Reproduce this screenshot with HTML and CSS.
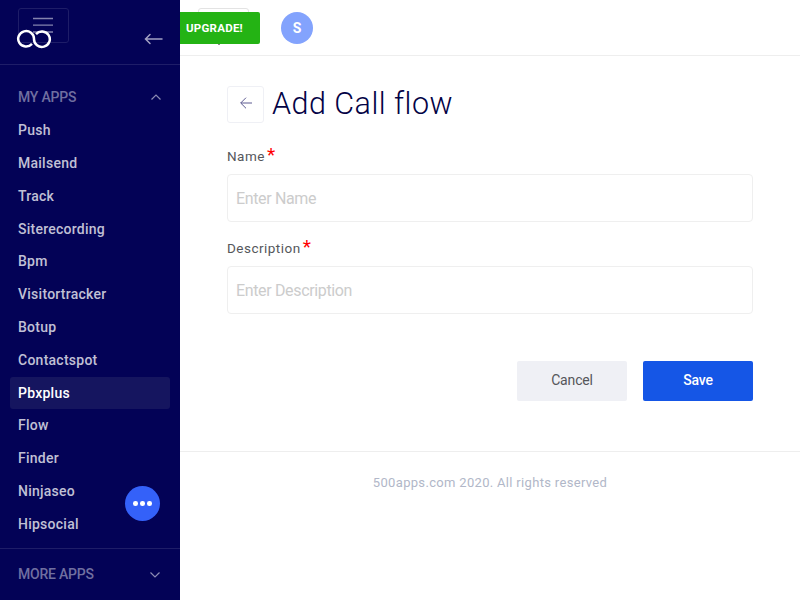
FILE: index.html
```html
<!DOCTYPE html>
<html lang="en">
<head>
<meta charset="utf-8">
<title>Add Call flow</title>
<link rel="stylesheet" href="styles.css">
</head>
<body>
<aside class="sidebar">
  <header class="brand">
    <button class="menu-toggle" aria-label="Menu"><svg width="20" height="16" viewBox="0 0 20 16"><path d="M0 1.5h20M0 8.2h20M0 15h20"/></svg></button>
    <svg class="logo" width="36" height="20" viewBox="0 0 36 20"><path d="M16 14.9A7.900 7.700 0 1 1 18 10A7.900 7.700 0 1 0 20 5.1"/></svg>
    <svg class="collapse" width="20" height="12" viewBox="0 0 20 12"><path d="M18 6H2M6 1.500L1.500 6l4.500 4.500"/></svg>
  </header>
  <div class="section section-open">MY APPS<svg width="12" height="8" viewBox="0 0 12 8"><path d="M1.500 6.500L6 2l4.500 4.500"/></svg></div>
  <nav class="apps">
    <a>Push</a>
    <a>Mailsend</a>
    <a>Track</a>
    <a>Siterecording</a>
    <a>Bpm</a>
    <a>Visitortracker</a>
    <a>Botup</a>
    <a>Contactspot</a>
    <a class="active">Pbxplus</a>
    <a>Flow</a>
    <a>Finder</a>
    <a>Ninjaseo</a>
    <a>Hipsocial</a>
  </nav>
  <div class="section section-more">MORE APPS<svg width="12" height="8" viewBox="0 0 12 8"><path d="M1.500 1.500L6 6l4.500-4.500"/></svg></div>
  <button class="chat" aria-label="More"><i></i><i></i><i></i></button>
</aside>
<div class="page">
  <header class="topbar">
    <span class="hidden-toggle"></span>
    <a class="upgrade">UPGRADE!</a>
    <span class="avatar">S</span>
  </header>
  <main class="content">
    <div class="heading">
      <button class="back" aria-label="Back"><svg width="12" height="12" viewBox="0 0 12 12"><path d="M12 6H.8M6 .7L.7 6 6 11.300"/></svg></button>
      <h1>Add Call flow</h1>
    </div>
    <form>
      <label for="name">Name<span class="required">*</span></label>
      <input id="name" placeholder="Enter Name">
      <label for="description">Description<span class="required">*</span></label>
      <input id="description" placeholder="Enter Description">
      <div class="actions">
        <button type="button" class="cancel">Cancel</button>
        <button type="button" class="save">Save</button>
      </div>
    </form>
  </main>
  <footer class="footer">500apps.com 2020. All rights reserved</footer>
</div>
</body>
</html>
```
FILE: styles.css
```css
* { box-sizing: border-box; }
body { margin: 0; height: 600px; display: flex; overflow: hidden; background: #fff; font-family: Roboto, sans-serif; font-size: 14px; }
button, input { font-family: inherit; margin: 0; }
svg { display: block; fill: none; }

.sidebar { position: relative; width: 180px; height: 600px; flex: none; background: #030256; color: #c0c0d5; }
.brand { position: relative; height: 65px; border-bottom: 1px solid #1e1d68; }
.menu-toggle { position: absolute; left: 18px; top: 8px; width: 51px; height: 35px; border: 1px solid #1e1d68; border-radius: 3px; background: none; padding: 0; }
.menu-toggle svg { position: absolute; left: 14px; top: 8px; stroke: #8483ae; stroke-width: 1.3; }
.logo { position: absolute; left: 16px; top: 29px; stroke: #fff; stroke-width: 2.5; }
.collapse { position: absolute; left: 144px; top: 33px; stroke: #a3a1c3; stroke-width: 1.5; stroke-linecap: round; }

.section { display: flex; align-items: center; justify-content: space-between; padding: 0 18px; color: #706fa0; font-size: 14px; font-weight: 500; letter-spacing: -.22px; }
.section svg { stroke: #8c8bb3; stroke-width: 1.2; }
.section-open { height: 49px; padding-top: 15px; }
.apps { display: flex; flex-direction: column; padding: .3px 10px 0; height: 434px; }
.apps a { height: 32.800px; flex: none; padding: 0 8px; line-height: 32.800px; font-size: 14px; font-weight: 500; letter-spacing: .25px; border-radius: 3px; }
.apps .active { background: #15155f; color: #fff; }
.section-more { height: 52px; padding-bottom: 2px; border-top: 1px solid #1e1d68; }
.section-more svg { position: relative; top: 1px; left: -1px; }
.chat { position: absolute; left: 125px; top: 486px; width: 35px; height: 35px; border: 0; border-radius: 50%; background: #3461f9; padding: 0; display: flex; align-items: center; justify-content: center; gap: 2.500px; }
.chat i { width: 4.700px; height: 4.700px; border-radius: 50%; background: #fff; }

.page { flex: 1; display: flex; flex-direction: column; }
.topbar { position: relative; height: 56px; flex: none; display: flex; align-items: center; gap: 21px; border-bottom: 1px solid #eee; }
.hidden-toggle { position: absolute; left: 18px; top: 8px; width: 51px; height: 30px; border: 1px solid #e3e3e3; border-radius: 3px; }
.hidden-toggle::after { content: ""; position: absolute; left: 19px; top: 34px; width: 2px; height: 2px; background: #888; }
.upgrade { position: relative; width: 80px; height: 32px; padding-left: 6px; line-height: 33px; border-radius: 0 2px 2px 0; background: #24b314; color: #fff; font-size: 11.500px; font-weight: 700; letter-spacing: .25px; }
.avatar { width: 32px; height: 32px; border-radius: 50%; background: #83a3fd; color: #fff; font-size: 14px; font-weight: 700; line-height: 33px; text-align: center; }

.content { height: 395px; padding: 28px 47px 0; }
.heading { height: 40px; display: flex; align-items: center; gap: 8px; }
.back { width: 37px; height: 37px; padding: 0; display: flex; align-items: center; justify-content: center; background: #fff; border: 1px solid #eff0f5; border-radius: 3px; }
.back svg { stroke: #5d5b91; stroke-width: 1; position: relative; top: -1px; }
h1 { margin: 0; color: #030245; font-size: 30.500px; font-weight: 300; letter-spacing: .48px; line-height: 40px; }
form { display: flex; flex-direction: column; padding-top: 22px; }
label { display: flex; height: 28px; line-height: 20px; color: #55575c; font-size: 13.500px; letter-spacing: .48px; }
.required { color: #f00; font-size: 19px; line-height: 17px; margin-left: 2px; letter-spacing: 0; }
input { width: 100%; height: 48px; margin-bottom: 16px; padding: 0 8px; border: 1px solid #efefef; border-radius: 4px; font-size: 16px; letter-spacing: -.35px; }
input::placeholder { color: #ccc; opacity: 1; }
.actions { display: flex; justify-content: flex-end; gap: 16px; padding-top: 31px; }
.actions button { width: 110px; height: 40px; border: 0; border-radius: 2px; padding: 0 0 2px; font-size: 14px; letter-spacing: -.15px; }
.cancel { background: #eff0f5; color: #55565a; }
.actions .save { background: #1556e6; color: #fff; font-weight: 500; }
.footer { border-top: 1px solid #eee; padding-top: 21px; color: #b1b7c8; font-size: 13px; line-height: 20px; letter-spacing: .32px; text-align: center; }
```
